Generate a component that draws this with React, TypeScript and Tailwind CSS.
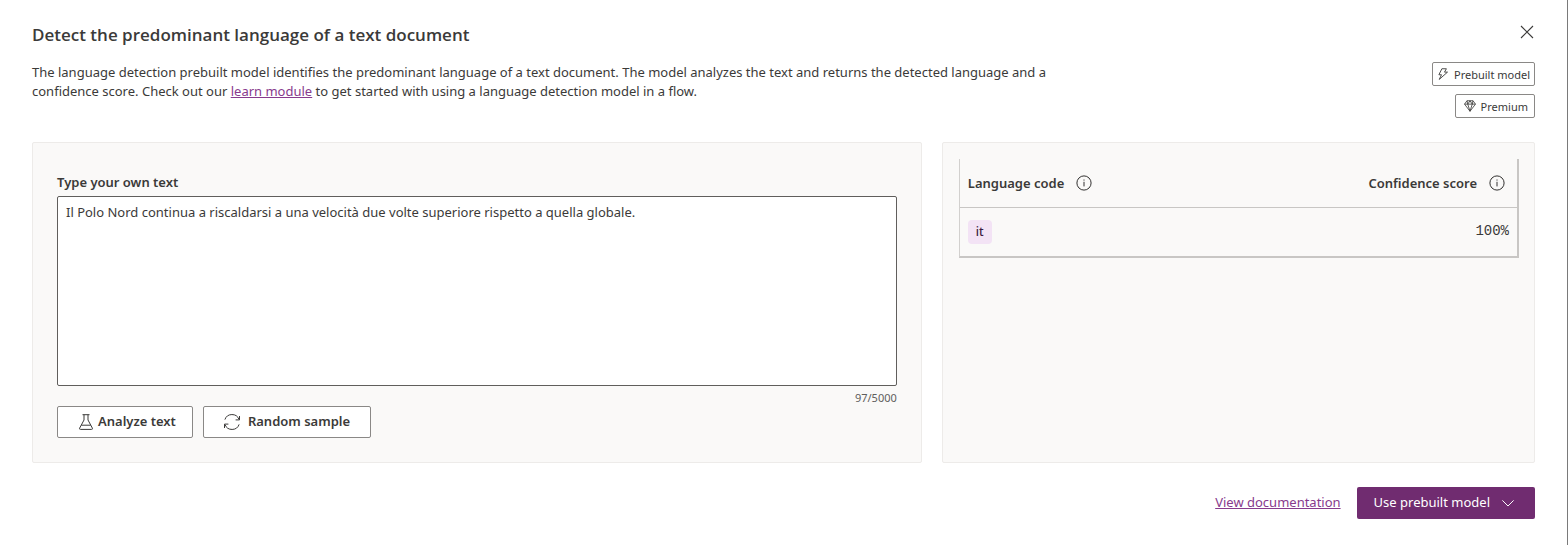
import { useState } from "react";
import type { ReactNode } from "react";

function Icon({ className, children, box = 16 }: { className: string; children: ReactNode; box?: number }) {
  return (
    <svg
      viewBox={`0 0 ${box} ${box}`}
      className={`shrink-0 ${className}`}
      fill="none"
      stroke="currentColor"
      strokeLinejoin="round"
      aria-hidden="true"
    >
      {children}
    </svg>
  );
}

function InfoButton({ label }: { label: string }) {
  return (
    <button type="button" aria-label={label} className="text-[#323130]">
      <Icon className="size-4">
        <circle cx="8" cy="8" r="7.1" strokeWidth="1" />
        <path d="M8 6.8V11.4M8 4.5V5.6" strokeWidth="1" />
      </Icon>
    </button>
  );
}

function Tag({ icon, children }: { icon: ReactNode; children: ReactNode }) {
  return (
    <span className="flex h-6 items-center gap-[5px] rounded-xs border border-[#8a8886] bg-white pr-1 text-[11px] text-[#3b3a39]">
      {icon}
      <span className="pt-0.5">{children}</span>
    </span>
  );
}

const results = [{ code: "it", score: "100%" }];

export default function App() {
  const [text, setText] = useState(
    "Il Polo Nord continua a riscaldarsi a una velocità due volte superiore rispetto a quella globale.",
  );

  return (
    <main className="min-h-screen border-r border-[#7a7a7a] bg-white px-8 pt-5 pb-6 font-['Noto_Sans','Open_Sans',sans-serif] text-[13px] text-[#3b3a39]">
      <header className="flex justify-between">
        <div>
          <h1 className="font-['Open_Sans',sans-serif] text-[17px] leading-[30px] font-semibold">
            Detect the predominant language of a text document
          </h1>
          <p className="mt-[13px] max-w-[1040px] leading-[19px]">
            The language detection prebuilt model identifies the predominant language of a text document. The model
            analyzes the text and returns the detected language and a confidence score. Check out our{" "}
            <a href="#learn" className="text-[#873a8d] underline">
              learn module
            </a>{" "}
            to get started with using a language detection model in a flow.
          </p>
        </div>
        <div className="flex flex-col items-end gap-2">
          <button type="button" aria-label="Close" className="mb-2.5 flex h-6 w-4 items-center justify-center">
            <Icon className="size-4">
              <path d="M2 2L14 14M14 2L2 14" strokeWidth="1.1" />
            </Icon>
          </button>
          <Tag
            icon={
              <Icon className="ml-1 size-3">
                <path d="M6.5 1H12.5L10 5.5H14L3 15.2L6 9H2.5Z" strokeWidth="1.2" />
              </Icon>
            }
          >
            Prebuilt model
          </Tag>
          <Tag
            icon={
              <Icon className="ml-2 size-3">
                <path
                  d="M4 1H12L15.3 5.5L8 15L.7 5.5ZM.7 5.5H15.3M4 1L5 5.5L8 15L11 5.5L12 1M5 5.5L8 1L11 5.5"
                  strokeWidth="1.1"
                />
              </Icon>
            }
          >
            <span className="pr-0.5">Premium</span>
          </Tag>
        </div>
      </header>

      <div className="mt-6 grid grid-cols-[3fr_2fr] gap-5">
        <section className="rounded-xs border border-[#edebe9] bg-[#faf9f8] p-6">
          <label htmlFor="source" className="block pt-[3px] pb-0.5 leading-6 font-semibold">
            Type your own text
          </label>
          <textarea
            id="source"
            value={text}
            onChange={(event) => setText(event.target.value)}
            maxLength={5000}
            className="block h-[190px] w-full resize-none rounded-xs border border-[#605e5c] bg-white px-2 py-[5px] leading-5 outline-none"
          />
          <div className="mt-1 text-right text-[11px] leading-4 text-[#605e5c]">{text.length}/5000</div>
          <div className="flex gap-2.5">
            <button
              type="button"
              className="flex h-8 items-center gap-1 rounded-xs border border-[#8a8886] bg-white pr-4 pl-5 font-semibold"
            >
              <Icon className="size-4">
                <path
                  d="M4.5 .7H11.5M6 .7V6L1.6 14.2Q1.2 15.4 2.4 15.4H13.6Q14.8 15.4 14.4 14.2L10 6V.7M3.3 11.2H12.7"
                  strokeWidth="1"
                />
              </Icon>
              Analyze text
            </button>
            <button
              type="button"
              className="flex h-8 items-center gap-2 rounded-xs border border-[#8a8886] bg-white px-5 font-semibold"
            >
              <Icon className="size-4">
                <path
                  d="M.9 5.6A7.5 7.5 0 0 1 15 5.4M15.5 2V5.9H11.6M15.1 10.4A7.5 7.5 0 0 1 1 10.6M.5 14V10.1H4.4"
                  strokeWidth="1"
                />
              </Icon>
              Random sample
            </button>
          </div>
        </section>

        <section className="rounded-xs border border-[#edebe9] bg-[#faf9f8] py-4 pr-[15px] pl-4">
          <div className="border-r-2 border-b-2 border-l border-[#c8c6c4] border-l-[#d2d0ce]">
            <table className="w-full">
              <thead>
                <tr className="h-12 border-b border-[#c8c6c4]">
                  <th scope="col" className="px-2">
                    <div className="flex items-center gap-3 font-semibold">
                      <span className="pt-0.5">Language code</span>
                      <InfoButton label="About language code" />
                    </div>
                  </th>
                  <th scope="col" className="px-3">
                    <div className="flex items-center justify-end gap-3 font-semibold">
                      <span className="pt-0.5">Confidence score</span>
                      <InfoButton label="About confidence score" />
                    </div>
                  </th>
                </tr>
              </thead>
              <tbody>
                {results.map((row) => (
                  <tr key={row.code} className="h-[49px]">
                    <td className="px-2">
                      <span className="inline-block rounded-sm bg-[#f3e3f5] px-2 text-[12px] leading-6 font-medium text-[#3b1a40]">
                        {row.code}
                      </span>
                    </td>
                    <td className="px-2 text-right font-['Liberation_Mono',monospace] text-[14px]">{row.score}</td>
                  </tr>
                ))}
              </tbody>
            </table>
          </div>
        </section>
      </div>

      <footer className="mt-6 flex items-center justify-end gap-4">
        <a href="#documentation" className="text-[#873a8d] underline">
          View documentation
        </a>
        <button
          type="button"
          className="flex h-8 items-center gap-3 rounded-xs bg-[#702c70] pr-[21px] pl-[17px] text-white"
        >
          Use prebuilt model
          <Icon className="size-3">
            <path d="M.5 4.5L8 12L15.5 4.5" strokeWidth="1.3" />
          </Icon>
        </button>
      </footer>
    </main>
  );
}
